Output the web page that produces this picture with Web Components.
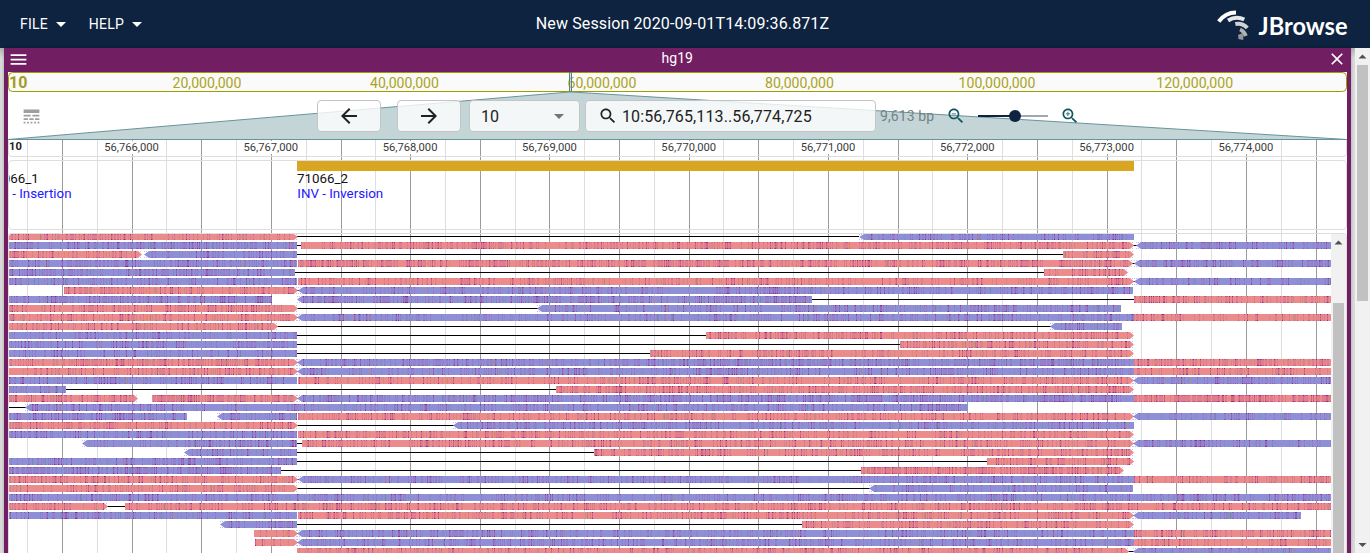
<!DOCTYPE html>
<html lang="en">
<head>
<meta charset="utf-8">
<title>JBrowse</title>
<style>
html,body{margin:0;height:100%;overflow:hidden}
body{font-family:Roboto,"Liberation Sans",sans-serif;background:#d3d3d3}
</style>
</head>
<body>
<jb-app></jb-app>
<script>
const ICONS={
 menu:'M3 18h18v-2H3v2zm0-5h18v-2H3v2zm0-7v2h18V6H3z',
 close:'M19 6.41L17.59 5 12 10.59 6.41 5 5 6.41 10.59 12 5 17.59 6.41 19 12 13.41 17.59 19 19 17.59 13.41 12z',
 down:'M7 10l5 5 5-5z',
 back:'M20 11H7.83l5.59-5.59L12 4l-8 8 8 8 1.41-1.41L7.83 13H20v-2z',
 forward:'M12 4l-1.41 1.41L16.17 11H4v2h12.17l-5.58 5.59L12 20l8-8z',
 search:'M15.5 14h-.79l-.28-.27C15.41 12.59 16 11.11 16 9.5 16 5.91 13.09 3 9.5 3S3 5.91 3 9.5 5.91 16 9.5 16c1.61 0 3.09-.59 4.23-1.57l.27.28v.79l5 4.99L20.49 19l-4.99-5zm-6 0C7.01 14 5 11.99 5 9.5S7.01 5 9.5 5 14 7.01 14 9.5 11.99 14 9.5 14z',
 lines:'M3 16h5v-2H3v2zm6.5 0h5v-2h-5v2zm6.5 0h5v-2h-5v2zM3 20h2v-2H3v2zm4 0h2v-2H7v2zm4 0h2v-2h-2v2zm4 0h2v-2h-2v2zm4 0h2v-2h-2v2zM3 12h8v-2H3v2zm10 0h8v-2h-8v2zM3 4v4h18V4H3z'
};
ICONS.zoomout=ICONS.search+'M7 9h5v1H7z';
ICONS.zoomin=ICONS.search+'m2.5-4h-2v2H9v-2H7V9h2V7h1v2h2v1z';

function define(name,css,html){
  customElements.define(name,class extends HTMLElement{
    connectedCallback(){
      if(this.shadowRoot)return;
      const r=this.attachShadow({mode:'open'});
      r.innerHTML='<style>*{box-sizing:border-box}'+css+'</style>'+(typeof html==='function'?html(this):html);
    }
  });
}

define('jb-icon',':host{display:inline-flex;flex:none}svg{display:block;fill:currentColor}',el=>{
  const s=el.getAttribute('size')||24;
  return `<svg width="${s}" height="${s}" viewBox="0 0 24 24"><path d="${ICONS[el.getAttribute('name')]}"/></svg>`;
});

define('jb-menu-button',':host{display:flex;align-items:center;font-size:14px;letter-spacing:.2px;color:#fff}jb-icon{margin-left:1px}','<slot></slot><jb-icon name="down" size="24"></jb-icon>');

define('jb-logo',':host{display:block}svg{display:block}',`<svg width="134" height="36" viewBox="1216 6 134 36">
<g fill="none" stroke-width="4">
<path d="M1218.700 21.500Q1225.500 12.500 1236 12.500" stroke="#fff"/>
<path d="M1228 20.500Q1236 15.500 1244.300 19.500" stroke="#e4e6e8"/>
<path d="M1235.300 24Q1242.500 22.500 1247.300 28" stroke="#cfd1d4"/>
<path d="M1240 29.500Q1244 31 1245.800 36" stroke="#b0b2b5"/>
<path d="M1240.300 34Q1241.300 36.500 1240.800 39.500" stroke="#949699" stroke-width="5"/>
</g>
<text x="1258.500" y="35" fill="#fff" font-family="Lato,sans-serif" font-weight="700" font-size="24.500" textLength="89" lengthAdjust="spacingAndGlyphs">JBrowse</text></svg>`);

define('jb-header',':host{display:grid;grid-template-columns:1fr auto 1fr;align-items:center;height:48px;background:#0d233f;color:#fff;padding:0 22px 0 20px}nav{display:flex;gap:16px}.t{font-size:16px;letter-spacing:.12px;padding:0 3px 2px 0}jb-logo{justify-self:end;margin-right:-2px}',
`<nav><jb-menu-button>FILE</jb-menu-button><jb-menu-button>HELP</jb-menu-button></nav><div class="t">New Session 2020-09-01T14:09:36.871Z</div><jb-logo></jb-logo>`);

define('jb-title-bar',':host{display:flex;align-items:center;justify-content:space-between;height:24px;padding:0 0 2px;color:#fff;font-size:14px}span{padding:0 1px 3px 0}.m{margin-left:-.500px}',
`<jb-icon class="m" name="menu" size="21"></jb-icon><span>hg19</span><jb-icon name="close" size="20"></jb-icon>`);

define('jb-overview',':host{display:block;height:20px}svg{display:block}',()=>{
  const l=[[207,'20,000,000'],[404.500,'40,000,000'],[602,'60,000,000'],[799.500,'80,000,000'],[997,'100,000,000'],[1194.700,'120,000,000']];
  return `<svg width="1339" height="20" viewBox="8 72 1339 20"><rect x="8.500" y="72.500" width="1338" height="19" rx="4" fill="#fafafa" stroke="#9e9d00"/><g fill="#aba41c" font-size="14.100">
  <text x="9" y="88" font-weight="700" font-size="16" fill="#9e9d24">10</text>${l.map(a=>`<text x="${a[0]}" y="88" text-anchor="middle">${a[1]}</text>`).join('')}</g><rect x="569.500" y="72" width="2" height="20" fill="#bdd2d5" fill-opacity=".6" stroke="#5b8086"/></svg>`;
});

define('jb-slider',':host{display:block}svg{display:block}','<svg width="72" height="14" viewBox="0 0 72 14"><path d="M1 7h70" stroke="#9ea7b2" stroke-width="2"/><path d="M1 7h37" stroke="#0d233f" stroke-width="2"/><circle cx="38" cy="7" r="6" fill="#0d233f"/></svg>');

define('jb-controls',`:host{display:grid;height:48px;width:1339px}
.bg,.row{grid-area:1/1}.bg{display:block}
.row{display:flex;align-items:center;color:#212121;font-size:16px}
.box{height:32px;border:1px solid #c4c4c4;border-radius:4px;background:rgba(255,255,255,.8);display:flex;align-items:center;justify-content:center}
.ar{width:64px;margin-right:16px}.lead{margin:0 275.500px 0 12.500px;color:#9e9e9e}
.sel{width:111px;margin:0 5px 0 -8px;justify-content:space-between;padding:0 8px 0 11px}.sel jb-icon{color:#757575}
.find{width:291px;justify-content:flex-start;padding-left:12px;gap:4px;letter-spacing:.12px}
.bp{color:#748285;font-size:14px;letter-spacing:.1px;margin:0 11px 0 4px;width:55px;white-space:nowrap}
.z{color:#135560}jb-slider{margin:0 11px 0 11px}`,
`<svg class="bg" width="1339" height="48" viewBox="8 92 1339 48"><path d="M8 139.500L569.500 92H571.500L1347 139.500Z" fill="#c4d5d8" stroke="#69949a"/></svg>
<div class="row"><jb-icon class="lead" name="lines" size="21"></jb-icon><div class="box ar"><jb-icon name="back"></jb-icon></div><div class="box ar"><jb-icon name="forward"></jb-icon></div><div class="box sel"><span>10</span><jb-icon name="down"></jb-icon></div><div class="box find"><jb-icon name="search" size="20"></jb-icon><span>10:56,765,113..56,774,725</span></div><div class="bp">9,613 bp</div><jb-icon class="z" name="zoomout" size="20"></jb-icon><jb-slider></jb-slider><jb-icon class="z" name="zoomin" size="20"></jb-icon></div>`);

define('jb-gridlines',':host{display:block}svg{display:block}',()=>{
  let a='',b='';
  for(let k=0;k<19;k++){
    const x=k===5?410:Math.floor(62.370+69.660*k),m=Math.floor(27.400+69.660*k);
    a+=k%2?`M${x} 140h1v1h-1zM${x} 154h1v399h-1z`:`M${x} 140h1v413h-1z`;
    b+=`M${m} 140h1v413h-1z`;
  }
  return `<svg width="1339" height="413" viewBox="8 140 1339 413"><path d="${b}" fill="#dedede"/><path d="${a}" fill="#9b9b9b"/></svg>`;
});

define('jb-ruler',':host{display:block;height:17px;border:1px solid #dedede;border-top:0;border-radius:0 0 4px 4px}svg{display:block}',()=>{
  let s='';
  for(let i=0;i<9;i++)s+=`<text x="${131.500+139.300*i}" y="151" text-anchor="middle">56,${766+i},000</text>`;
  return `<svg width="1337" height="16" viewBox="9 140 1337 16" font-size="11.200" fill="#3a3a3a"><text x="9" y="150" font-weight="700" fill="#222">10</text>${s}</svg>`;
});

define('jb-variants',':host{display:block;height:70px;border:1px solid #dedede;border-radius:4px}svg{display:block}',
`<svg width="1337" height="68" viewBox="9 161 1337 68" font-size="13.330"><rect x="297" y="161" width="837" height="10" fill="#daa520"/><text x="297" y="183" fill="#111">71066_2</text><text x="297.300" y="198" fill="#2218ff">INV - Inversion</text><text x="38.700" y="183" text-anchor="end" fill="#111">066_1</text><text x="71.500" y="198" text-anchor="end" fill="#2218ff">- Insertion</text></svg>`);

// Aligned reads per row: strand letter (r forward, b reverse), start, end, arrow flag; l is a connecting line.
const READS=`r9-297> l297-859 b860-1134<
b9-297 l297-301 r301-1133> l1133-1137 b1137-1331<
r9-141> b145-297< l297-1063 r1063-1133>
b9-297 r298-1132> l1132-1135 b1135-1331<
b9-295 l295-1044 r1044-1127>
b9-297 r298-1133> l1133-1135 b1135-1331<
r64-297> l297-300 b299-1133<
b9-272 b298-812< l812-1134 r1134-1331
r9-297> l297-538 b538-1121<
r9-297> l297-299 b298-1134< r1134-1331
r9-277> l277-1051 b1051-1122<
b9-297 l297-706 r706-1133>
b9-297 l297-900 r900-1133>
b9-297 l297-650 r650-1133>
r9-297> l297-299 b298-1134< r1134-1331
r9-297> l297-299 b298-1134< r1134-1331
b9-297 r298-1133> l1133-1135 b1134-1331<
b9-66 l66-556 r556-1133>
r9-137> r152-297> l297-299 b298-1134< r1134-1331
l9-26 b26-968<
b9-187 b218-297< r298-1133> l1133-1135 b1134-1331<
r9-297> l297-454 b454-1134<
b9-297 r298-1133>
b83-297< l297-302 r302-1133> l1133-1135 b1134-1331<
b185-297< l297-594 r594-1133>
b9-297 l297-987 r987-1133>
b9-281 l281-861 r861-1123>
r9-297> l297-300 b299-1134< r1134-1331
r9-297> l297-870 b870-1133<
b9-1331
r9-107> l107-125 r125-1331
b9-297 r298-1133> l1133-1135 b1134-1301<
b221-297< l297-802 r802-1133>
r254-297> l297-299 b298-1134< r1134-1331
r255-297> l297-299 b298-1134< r1134-1331
r297-1128> l1128-1134 b1134-1331<`.split('\n');
const DENSE={1:1.3,3:1.5,4:1.2,7:1.7,11:1.2,14:1.5,17:1.3,18:1.9,24:1.3,26:2,32:1.2};

define('jb-pileup',':host{display:flex;height:320px;border:1px solid #dedede;border-bottom:0;border-radius:4px 4px 0 0;overflow:hidden}svg{display:block;flex:none}',()=>{
  let seed=7919;
  const rnd=()=>(seed=(seed*1664525+1013904223)>>>0)/4294967296;
  const P={},add=(c,d)=>{P[c]=(P[c]||'')+d};
  READS.forEach((row,i)=>{
    const y=i?233+9*i:234,h=i?7:6;
    row.split(' ').forEach(t=>{
      const m=t.match(/^([rbl])(\d+)-(\d+)([<>]?)$/),a=+m[2],b=+m[3],k=m[1];
      if(k==='l'){add('line',`M${a} ${y+(i?3:2)}h${b-a}v1H${a}z`);return}
      const yb=y+h,ym=y+h/2;
      if(m[4]==='>')add(k,`M${a} ${y}H${b-3}L${b+1} ${ym}L${b-3} ${yb}H${a}z`);
      else if(m[4]==='<')add(k,`M${a+4} ${y}H${b}V${yb}H${a+4}L${a-1} ${ym}z`);
      else add(k,`M${a} ${y}H${b}V${yb}H${a}z`);
      const s=m[4]==='<'?a+5:a,e=m[4]==='>'?b-3:b;
      let local=1;
      for(let x=s;x<e;x++){
        if(x%17===0)local=.4+rnd()*1.3;
        const q=rnd(),d=.25*(DENSE[i]||1)*local;
        if(q<d){
          const strong=rnd()<.2;
          add(strong?'edge2':'edge',`M${x} ${y}h1v1h-1zM${x} ${yb-1}h1v1h-1z`);
          add(strong?'mid2':'mid',`M${x} ${y+1}h1v${h-2}h-1z`);
        }else if(q>.91)add('gray',`M${x} ${y}h1v${h}h-1z`);
        else if(q>.902)add(rnd()<.5?'green':'orange',`M${x} ${y}h1v${h}h-1z`);
      }
      if(m[4]==='>')add('tip',`M${b-1} ${y}h1v1h-1zM${b-1} ${yb-1}h1v1h-1z`);
      if(m[4]==='<')add('tip',`M${a-1} ${y}h1v1h-1zM${a+1} ${y}h1v1h-1zM${a-1} ${yb-1}h1v1h-1zM${a+1} ${yb-1}h1v1h-1z`);
    });
  });
  const C={line:['#000',1],r:['#ec8b8b',1],b:['#8f8fd8',1],gray:['#808080',.24],green:['#3f8a50',.38],orange:['#e88628',.35],mid:['#a0309a',.14],mid2:['#9a1c80',.34],edge:['#98208c',.44],edge2:['#84127e',.78],tip:['#8080ff',.5]};
  return `<svg width="1322" height="319" viewBox="9 234 1322 319">${Object.keys(C).map(c=>`<path d="${P[c]||''}" fill="${C[c][0]}" fill-opacity="${C[c][1]}"${/^[rb]$/.test(c)?'':' shape-rendering="crispEdges"'}/>`).join('')}</svg><jb-scrollbar start="69" length="400"></jb-scrollbar>`;
});

define('jb-scrollbar',':host{display:flex;flex-direction:column;align-items:center;width:15px;background:#f1f1f1;overflow:hidden;flex:none}i{display:block;width:11px;background:#c1c1c1;flex:none}svg{display:block;flex:none}.d{margin-top:auto}',el=>{
  const st=+el.getAttribute('start');
  return `<svg width="15" height="${st}"><path d="M3.500 10.500L7.500 6.500L11.500 10.500z" fill="#505050"/></svg><i style="height:${el.getAttribute('length')}px"></i>${el.hasAttribute('end')?'<svg class="d" width="15" height="12"><path d="M3.500 2L7.500 6L11.500 2z" fill="#505050"/></svg>':''}`;
});

define('jb-view',`:host{display:flex;flex-direction:column;background:#721e63;padding:0 4px;width:1347px;height:505px;overflow:hidden;box-shadow:0 0 3px rgba(0,0,0,.25)}
.body{background:#fff;height:481px;flex:none}.data{display:grid}.data>*{grid-area:1/1}.tracks{display:flex;flex-direction:column;gap:3px}`,
`<jb-title-bar></jb-title-bar><div class="body"><jb-overview></jb-overview><jb-controls></jb-controls><div class="data"><jb-gridlines></jb-gridlines><div class="tracks"><jb-ruler></jb-ruler><jb-variants></jb-variants><jb-pileup></jb-pileup></div></div></div>`);

define('jb-app',':host{display:block;width:1370px;height:553px;overflow:hidden}main{display:flex;height:505px;padding-left:4px;background:linear-gradient(#b5b5b5,#dadada 10px)}jb-scrollbar{margin-left:auto;position:relative}',
`<jb-header></jb-header><main><jb-view></jb-view><jb-scrollbar start="17" length="236" end></jb-scrollbar></main>`);
</script>
</body>
</html>
